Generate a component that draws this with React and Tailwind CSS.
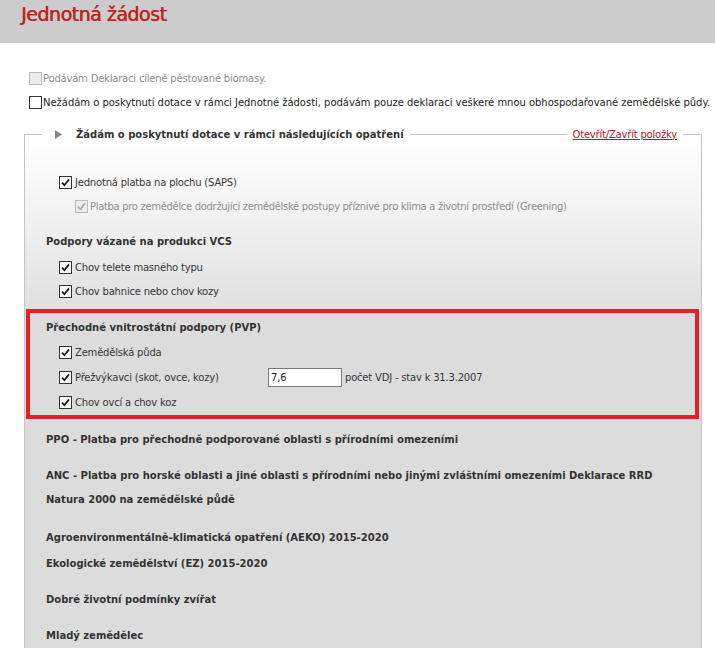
import React from "react";

const Check = ({ checked = false, disabled = false }) => (
  <span
    className={`flex h-[13px] w-[13px] shrink-0 items-center justify-center border ${
      disabled ? "border-[#b9b9b9] bg-[#ececec]" : "border-[#333333] bg-white"
    }`}
  >
    {checked && (
      <svg width="9" height="9" viewBox="0 0 9 9">
        <path
          d="M1 4.6 L3.4 7.2 L8 1.4"
          fill="none"
          stroke={disabled ? "#a9a9a9" : "#1a1a1a"}
          strokeWidth="1.8"
        />
      </svg>
    )}
  </span>
);

const Row = ({ children, className = "" }) => (
  <div className={`flex h-[24px] items-center ${className}`}>{children}</div>
);

const Heading = ({ children, className = "" }) => (
  <div className={`flex h-[24px] items-center pl-[21px] font-bold tracking-normal text-[#333333] ${className}`}>
    {children}
  </div>
);

export default function App() {
  return (
    <div className="h-[648px] w-[715px] overflow-hidden bg-white font-['DejaVu_Sans',sans-serif] text-[10px] tracking-[-0.2px] text-[#363636]">
      {/* Header */}
      <div className="flex h-[43px] items-start bg-[#cccccc] pl-[21px] pt-[2px]">
        <h1 className="text-[19px] leading-[24px] tracking-[-0.5px] text-[#c0241a] [text-shadow:0.5px_0_0_#c0241a]">
          Jednotná žádost
        </h1>
      </div>

      {/* Top options */}
      <div className="mt-[23px] pl-[29px]">
        <Row className="gap-[1px]">
          <Check disabled />
          <span className="text-[#8e8e8e]">Podávám Deklaraci cíleně pěstované biomasy.</span>
        </Row>
        <Row className="gap-[1px]">
          <Check />
          <span className="tracking-[-0.03px] text-[#222222]">
            Nežádám o poskytnutí dotace v rámci Jednotné žádosti, podávám pouze deklaraci veškeré mnou obhospodařované zemědělské půdy.
          </span>
        </Row>
      </div>

      {/* Fieldset */}
      <div className="ml-[24px] mt-[12px] w-[678px]">
        <div className="flex h-[16px] items-start">
          <div className="mt-[8px] h-[8px] w-[18px] border-l border-t border-[#c4c4c4]" />
          <div className="ml-[13px] flex h-[16px] items-center">
            <svg width="7" height="9" viewBox="0 0 7 9">
              <path d="M0 0 L7 4.5 L0 9 Z" fill="#8a8a8a" />
            </svg>
            <span className="ml-[14px] font-bold tracking-normal text-[#333333]">
              Žádám o poskytnutí dotace v rámci následujících opatření
            </span>
          </div>
          <div className="ml-[6px] mt-[8px] h-[8px] flex-1 border-t border-[#c4c4c4]" />
          <a href="#" className="mx-[6px] flex h-[16px] items-center text-[#a82218] underline">
            Otevřít/Zavřít položky
          </a>
          <div className="mt-[8px] h-[8px] w-[19px] border-r border-t border-[#c4c4c4]" />
        </div>

        <div className="border-x border-[#c4c4c4] bg-[linear-gradient(to_bottom,#ffffff_0px,#dcdcdc_190px)] pb-[1px]">
          <div className="pt-[28px]">
            <Row className="gap-[3px] pl-[34px]">
              <Check checked />
              <span>Jednotná platba na plochu (SAPS)</span>
            </Row>
            <Row className="gap-[2px] pl-[50px]">
              <Check checked disabled />
              <span className="tracking-[-0.32px] text-[#8e8e8e]">
                Platba pro zemědělce dodržující zemědělské postupy příznivé pro klima a životní prostředí (Greening)
              </span>
            </Row>
          </div>

          <Heading className="mt-[11px]">Podpory vázané na produkci VCS</Heading>
          <Row className="mt-[2px] gap-[3px] pl-[34px]">
            <Check checked />
            <span>Chov telete masného typu</span>
          </Row>
          <Row className="gap-[3px] pl-[34px]">
            <Check checked />
            <span>Chov bahnice nebo chov kozy</span>
          </Row>

          {/* Highlighted PVP block */}
          <div className="ml-[1px] mr-[2px] mt-[6px] border-[4px] border-[#e41f26] bg-[#dcdcdc] pt-[2px]">
            <div className="flex h-[25px] items-center pl-[16px] font-bold tracking-normal text-[#333333]">
              Přechodné vnitrostátní podpory (PVP)
            </div>
            <div className="flex h-[25px] items-center gap-[3px] pl-[29px]">
              <Check checked />
              <span>Zemědělská půda</span>
            </div>
            <div className="flex h-[25px] items-center pl-[29px]">
              <Check checked />
              <span className="ml-[3px] w-[193px]">Přežvýkavci (skot, ovce, kozy)</span>
              <input
                type="text"
                defaultValue="7,6"
                className="h-[19px] w-[74px] border border-[#7b7b7b] bg-white px-[2px] font-['DejaVu_Sans',sans-serif] text-[10px] tracking-[-0.2px] text-[#222222] outline-none"
              />
              <span className="ml-[3px]">počet VDJ - stav k 31.3.2007</span>
            </div>
            <div className="flex h-[25px] items-center gap-[3px] pl-[29px]">
              <Check checked />
              <span>Chov ovcí a chov koz</span>
            </div>
          </div>

          <Heading className="mt-[8px]">PPO - Platba pro přechodně podporované oblasti s přírodními omezeními</Heading>
          <Heading className="mt-[12px]">
            ANC - Platba pro horské oblasti a jiné oblasti s přírodními nebo jinými zvláštními omezeními Deklarace RRD
          </Heading>
          <Heading>Natura 2000 na zemědělské půdě</Heading>
          <Heading className="mt-[14px]">Agroenvironmentálně-klimatická opatření (AEKO) 2015-2020</Heading>
          <Heading className="mt-[2px]">Ekologické zemědělství (EZ) 2015-2020</Heading>
          <Heading className="mt-[12px]">Dobré životní podmínky zvířat</Heading>
          <Heading className="mt-[12px]">Mladý zemědělec</Heading>
        </div>
      </div>
    </div>
  );
}
